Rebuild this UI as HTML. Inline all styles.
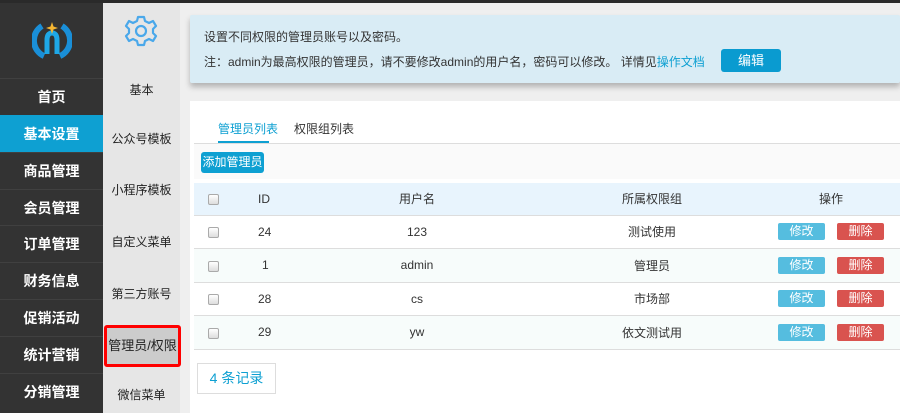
<!DOCTYPE html>
<html><head><meta charset="utf-8"><style>
*{margin:0;padding:0;box-sizing:border-box}
body{width:900px;height:413px;overflow:hidden;background:#efefef;font-family:"Liberation Sans","Noto Sans CJK SC",sans-serif;font-size:12px;color:#333;position:relative}
.top{position:absolute;left:0;top:0;width:900px;height:3px;background:#2a2a2a}
.side{position:absolute;left:0;top:3px;width:103px;height:410px;background:#333}
.nav{position:absolute;left:0;width:103px;height:37px;line-height:37px;text-align:center;color:#fff;font-size:14px;font-weight:bold;border-top:1px solid #404040}
.nav.on{background:#0ea0d2;border-top-color:#0ea0d2}
.sub{position:absolute;left:103px;top:3px;width:77px;height:410px;background:#e6e6e6}
.si{position:absolute;left:103px;width:77px;text-align:center;font-size:12px;color:#222}
.sel{position:absolute;left:104px;top:325px;width:77px;height:42px;background:#ccc;border:3px solid #f00;border-radius:3px;text-align:center;line-height:36px;font-size:13px;color:#222}
.note{position:absolute;left:190px;top:15px;width:710px;height:68px;background:#d9ecf5;box-shadow:0 4px 6px rgba(0,0,0,.25);border-radius:2px}
.note p{position:absolute;left:14px;font-size:12px;color:#333}
.card{position:absolute;left:190px;top:101px;width:710px;height:312px;background:#fff}
.btn{position:absolute;color:#fff;text-align:center;border-radius:3px;white-space:nowrap}
table{position:absolute;left:4px;top:82px;width:706px;border-collapse:collapse}
td{height:33.5px;border-bottom:1px solid #ddd;text-align:center;font-size:12px}
tr.h td{background:#e8f4fd;height:32px}
tr.a td{background:#f7fcfb}
.cb{display:inline-block;width:11px;height:11px;border:1px solid #aaa;border-radius:2px;background:linear-gradient(#fff,#ddd);vertical-align:middle}
.m,.d{display:inline-block;width:47px;height:17px;line-height:17px;color:#fff;border-radius:2px;font-size:12px}
.m{background:#55bddf}.d{background:#d9534f;margin-left:12px}
</style></head><body>
<div class="top"></div>
<div class="side">
<svg style="position:absolute;left:32px;top:17px" width="40" height="40" viewBox="0 0 40 40">
<path d="M10 6 A17 17 0 0 0 12 36" fill="none" stroke="#1a8fd8" stroke-width="6"/>
<path d="M30 6 A17 17 0 0 1 28 36" fill="none" stroke="#1a8fd8" stroke-width="6"/>
<path d="M15 34 V20 Q15 13 20 13 Q25 13 25 20 V34" fill="none" stroke="#1ea7e6" stroke-width="5"/>
<path d="M20 2 L21.5 6.5 L26 8 L21.5 9.5 L20 14 L18.5 9.5 L14 8 L18.5 6.5Z" fill="#f5b632"/>
</svg>
</div>
<div class="nav" style="top:78px">首页</div>
<div class="nav on" style="top:115px">基本设置</div>
<div class="nav" style="top:152px">商品管理</div>
<div class="nav" style="top:189px">会员管理</div>
<div class="nav" style="top:225px">订单管理</div>
<div class="nav" style="top:262px">财务信息</div>
<div class="nav" style="top:299px">促销活动</div>
<div class="nav" style="top:336px">统计营销</div>
<div class="nav" style="top:373px">分销管理</div>
<div class="sub"></div>
<svg style="position:absolute;left:123px;top:13px" width="36" height="36" viewBox="0 0 36 36">
<path d="M15 4 h6 l1 4 l4 2 l4 -2 l3 5 l-3 3 v4 l3 3 l-3 5 l-4 -2 l-4 2 l-1 4 h-6 l-1 -4 l-4 -2 l-4 2 l-3 -5 l3 -3 v-4 l-3 -3 l3 -5 l4 2 l4 -2z" fill="none" stroke="#4aa8ea" stroke-width="2.2" stroke-linejoin="round"/>
<circle cx="18" cy="18" r="5" fill="none" stroke="#4aa8ea" stroke-width="2.2"/>
</svg>
<div class="si" style="top:81px">基本</div>
<div class="si" style="top:130px">公众号模板</div>
<div class="si" style="top:181px">小程序模板</div>
<div class="si" style="top:233px">自定义菜单</div>
<div class="si" style="top:285px">第三方账号</div>
<div class="sel">管理员/权限</div>
<div class="si" style="top:386px">微信菜单</div>
<div class="note">
<p style="top:13px">设置不同权限的管理员账号以及密码。</p>
<p style="top:38px">注：admin为最高权限的管理员，请不要修改admin的用户名，密码可以修改。 详情见<span style="color:#0ea0d2">操作文档</span></p>
<div class="btn" style="left:531px;top:34px;width:60px;height:23px;line-height:23px;background:#0a9bd0;font-size:13px">编辑</div>
</div>
<div class="card">
<div style="position:absolute;left:28px;top:19px;color:#0ea0d2;font-size:12px">管理员列表</div>
<div style="position:absolute;left:28px;top:40px;width:51px;height:3px;background:#0ea0d2"></div>
<div style="position:absolute;left:104px;top:19px;color:#333">权限组列表</div>
<div style="position:absolute;left:4px;top:42px;width:706px;height:1px;background:#ddd"></div>
<div style="position:absolute;left:4px;top:43px;width:706px;height:35px;background:#fafafa"></div>
<div class="btn" style="left:11px;top:51px;width:63px;height:21px;line-height:21px;background:#0ea0d2;font-size:12px">添加管理员</div>
<table>
<tr class="h"><td style="width:38px"><span class="cb"></span></td><td style="width:60px;text-align:left;padding-left:26px">ID</td><td style="width:250px">用户名</td><td style="width:220px">所属权限组</td><td>操作</td></tr>
<tr><td><span class="cb"></span></td><td style="text-align:left;padding-left:26px">24</td><td>123</td><td>测试使用</td><td><span class="m">修改</span><span class="d">删除</span></td></tr>
<tr class="a"><td><span class="cb"></span></td><td style="text-align:left;padding-left:30px">1</td><td>admin</td><td>管理员</td><td><span class="m">修改</span><span class="d">删除</span></td></tr>
<tr><td><span class="cb"></span></td><td style="text-align:left;padding-left:26px">28</td><td>cs</td><td>市场部</td><td><span class="m">修改</span><span class="d">删除</span></td></tr>
<tr class="a"><td><span class="cb"></span></td><td style="text-align:left;padding-left:26px">29</td><td>yw</td><td>依文测试用</td><td><span class="m">修改</span><span class="d">删除</span></td></tr>
</table>
<div style="position:absolute;left:7px;top:262px;width:79px;height:31px;border:1px solid #ddd;color:#0ea0d2;font-size:14px;line-height:29px;text-align:center">4 条记录</div>
</div>
</body></html>
